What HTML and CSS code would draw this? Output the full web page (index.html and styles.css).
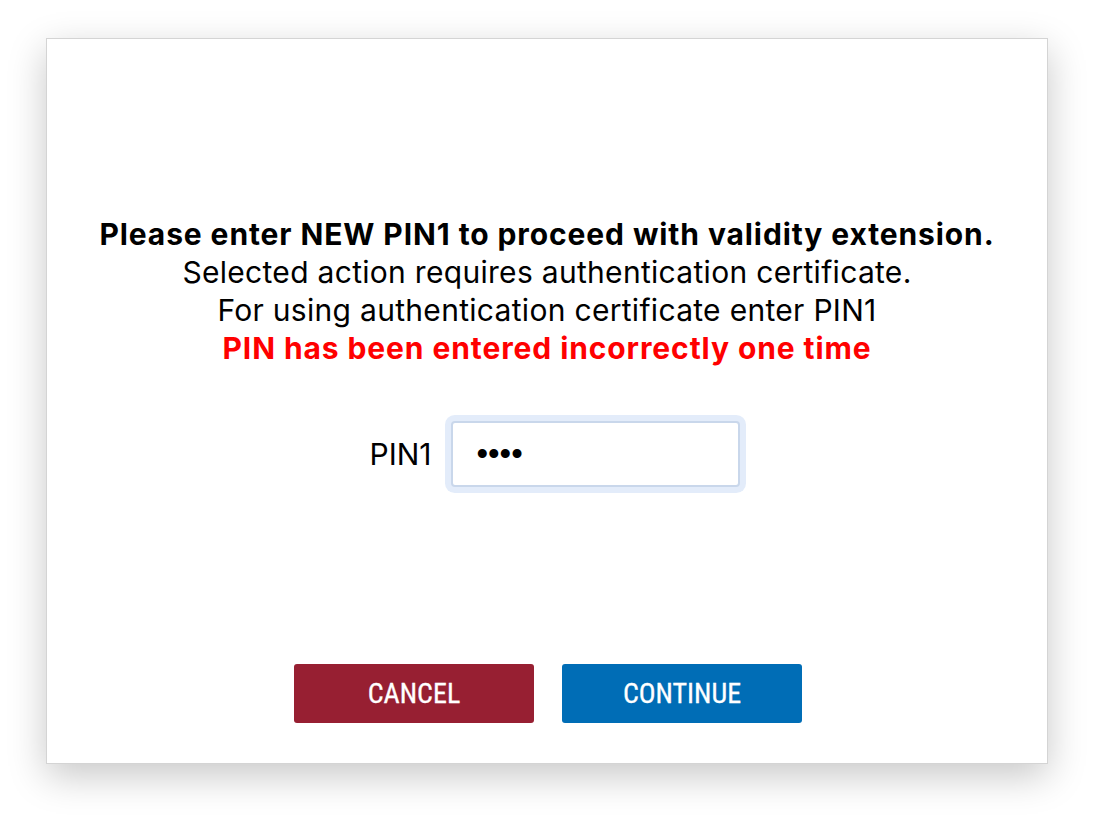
FILE: index.html
```html
<!DOCTYPE html>
<html lang="en">
<head>
  <meta charset="UTF-8">
  <meta name="viewport" content="width=device-width, initial-scale=1.0">
  <title>PIN1</title>
  <link rel="stylesheet" href="styles.css">
</head>
<body>
  <div class="dialog">
    <div class="message">
      <div class="title">Please enter NEW PIN1 to proceed with validity extension.</div>
      <div>Selected action requires authentication certificate.</div>
      <div>For using authentication certificate enter PIN1</div>
      <div class="error">PIN has been entered incorrectly one time</div>
    </div>
    <div class="pin">
      <label for="pin1">PIN1</label>
      <input type="password" id="pin1" value="1234" autofocus>
    </div>
    <div class="buttons">
      <button class="cancel">Cancel</button>
      <button class="continue">Continue</button>
    </div>
  </div>
</body>
</html>
```

FILE: styles.css
```css
body{
  margin: 0;
  padding: 38px 46px 54px;
  background-color: #fff;
  font-family: Inter, "Noto Sans", sans-serif;
}
.dialog{
  height: 726px;
  box-sizing: border-box;
  border: 1px solid #d4d4d4;
  box-shadow: 0 12px 36px rgba(0,0,0,0.22);
  display: flex;
  flex-direction: column;
  align-items: center;
  padding-top: 176px;
}
.message{
  text-align: center;
  font-size: 30px;
  line-height: 38px;
  letter-spacing: 0.3px;
  color: #000;
}
.message .title{
  font-weight: 700;
  letter-spacing: 0.9px;
}
.message .error{
  color: #ff0000;
  font-weight: 700;
  letter-spacing: 0.9px;
}
/* PIN row */
.pin{
  margin-top: 54px;
  margin-left: 15px;
  display: flex;
  align-items: center;
  gap: 19px;
  font-size: 30px;
}
.pin input{
  width: 289px;
  height: 66px;
  box-sizing: border-box;
  border: 2px solid #c9d7eb;
  border-radius: 4px;
  box-shadow: 0 0 0 6px #e3ecfa;
  padding: 0 24px;
  font-size: 33px;
  letter-spacing: 0;
  outline: none;
  color: #000;
  caret-color: #000;
}
/* buttons */
.buttons{
  margin-top: 177px;
  margin-left: 2px;
  display: flex;
  gap: 28px;
}
.buttons button{
  width: 240px;
  height: 59px;
  border: none;
  border-radius: 3px;
  color: #fff;
  font-family: "Roboto Condensed", "Liberation Sans Narrow", "DejaVu Sans Condensed", sans-serif;
  font-stretch: condensed;
  font-size: 28px;
  text-transform: uppercase;
  -webkit-text-stroke: 0.3px #fff;
}
.cancel{
  background-color: #971f32;
}
.continue{
  background-color: #006db6;
}
```
